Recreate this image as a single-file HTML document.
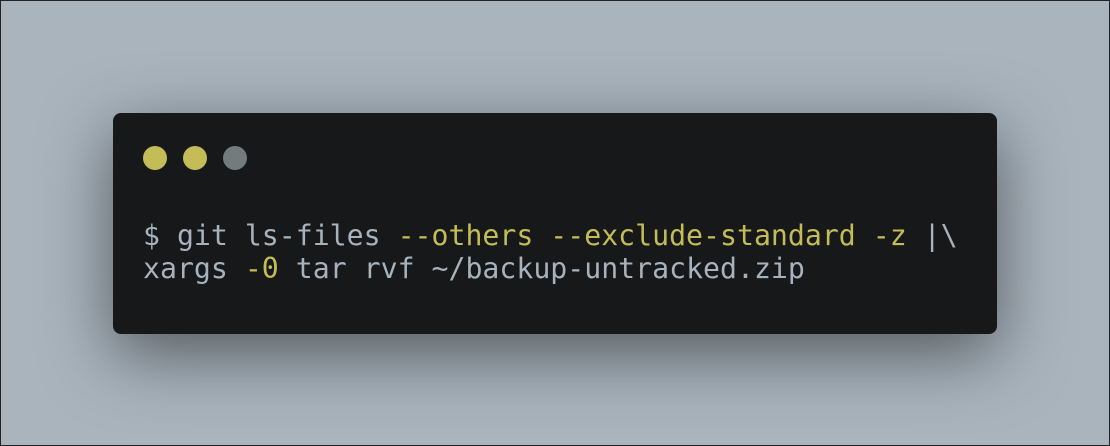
<!DOCTYPE html>
<html><head><style>
html,body{margin:0;padding:0;}
body{width:1110px;height:446px;overflow:hidden;background:#a9b4bd;position:relative;}
.frame{position:absolute;left:0;top:0;width:1108px;height:444px;border:1px solid #222;}
.card{position:absolute;left:113px;top:113px;width:884px;height:221px;background:#17181a;border-radius:8px;box-shadow:0 20px 68px rgba(0,0,0,0.5);}
.dot{position:absolute;top:33px;width:24px;height:24px;border-radius:50%;}
pre{position:absolute;left:30px;top:106px;margin:0;font-family:"DejaVu Sans Mono","Liberation Mono",monospace;font-size:28.2px;line-height:33px;color:#a6b2bc;}
.y{color:#c3bc57;}
</style></head><body>
<div class="frame"></div>
<div class="card">
<div class="dot" style="left:30px;background:#c3bc57"></div>
<div class="dot" style="left:70px;background:#c3bc57"></div>
<div class="dot" style="left:110px;background:#737c7c"></div>
<pre>$ git ls-files <span class="y">--others --exclude-standard -z</span> |\
xargs <span class="y">-0</span> tar rvf ~/backup-untracked.zip</pre>
</div>
</body></html>
